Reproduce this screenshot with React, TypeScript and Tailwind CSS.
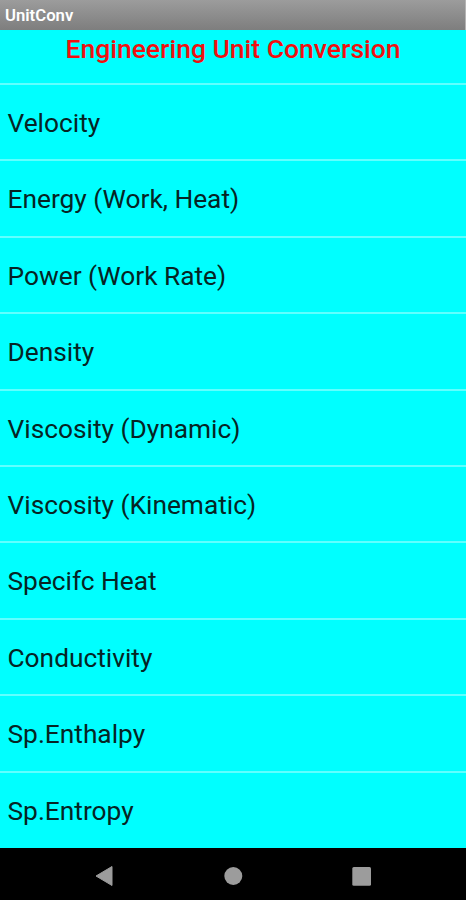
import React from 'react';

const units = [
  'Velocity',
  'Energy (Work, Heat)',
  'Power (Work Rate)',
  'Density',
  'Viscosity (Dynamic)',
  'Viscosity (Kinematic)',
  'Specifc Heat',
  'Conductivity',
  'Sp.Enthalpy',
  'Sp.Entropy',
];

const App: React.FC = () => {
  return (
    <div className="w-full h-[900px] flex flex-col overflow-hidden bg-[#00ffff] font-['Roboto',sans-serif]">
      {/* Title bar */}
      <div className="h-[30px] shrink-0 flex items-center pl-[5px] pt-[2px] bg-linear-to-b from-[#9c9c9c] to-[#7e7e7e] border-r border-r-[#b4b4b4]">
        <span className="text-white text-[16.7px] font-semibold leading-none">UnitConv</span>
      </div>

      <h1 className="h-[53px] shrink-0 pt-[3px] text-center text-[26.5px] leading-[32px] font-medium text-[#f01010]">
        Engineering Unit Conversion
      </h1>

      {/* Unit list */}
      <ul className="h-[764px] shrink-0 flex flex-col">
        {units.map(unit => (
          <li key={unit} className="flex-1 flex items-center pl-[7.5px] pt-[2px] border-t-2 border-[#60ffff]">
            <span className="text-[26.3px] leading-none text-[#062424]">{unit}</span>
          </li>
        ))}
      </ul>

      {/* Navigation bar */}
      <div className="h-[52px] mt-auto shrink-0 bg-black">
        <svg className="w-full h-full" viewBox="0 0 466 52" fill="#9c9c9c">
          <path d="M96 28L112 18.5V37.5Z" stroke="#9c9c9c" strokeWidth="1" strokeLinejoin="round" />
          <circle cx="233.3" cy="28" r="9" />
          <rect x="352.3" y="19" width="18.7" height="18.7" rx="1.5" />
        </svg>
      </div>
    </div>
  );
};

export default App;
